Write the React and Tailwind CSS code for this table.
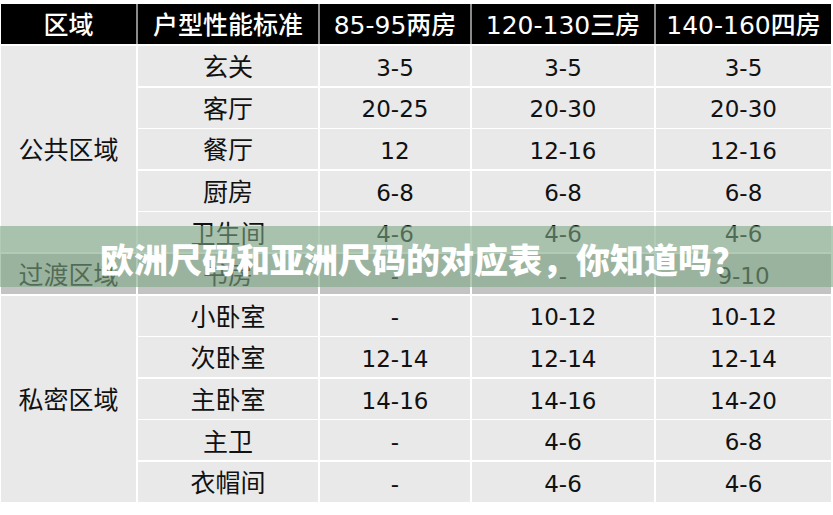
import React from 'react'

const font = { fontFamily: '"DejaVu Sans", "Noto Sans CJK SC", sans-serif' }

const headers = ['区域', '户型性能标准', '85-95两房', '120-130三房', '140-160四房']

const rows = [
  ['玄关', '3-5', '3-5', '3-5'],
  ['客厅', '20-25', '20-30', '20-30'],
  ['餐厅', '12', '12-16', '12-16'],
  ['厨房', '6-8', '6-8', '6-8'],
  ['卫生间', '4-6', '4-6', '4-6'],
  ['书房', '-', '-', '9-10'],
  ['小卧室', '-', '10-12', '10-12'],
  ['次卧室', '12-14', '12-14', '12-14'],
  ['主卧室', '14-16', '14-16', '14-20'],
  ['主卫', '-', '4-6', '6-8'],
  ['衣帽间', '-', '4-6', '4-6'],
]

// zone column is merged over several rows
const zones = [
  { name: '公共区域', span: 'row-span-5', start: 1, dark: false },
  { name: '过渡区域', span: 'row-span-1', start: 6, dark: true },
  { name: '私密区域', span: 'row-span-5', start: 7, dark: false },
]

const cols = 'grid grid-cols-[135px_180px_150px_182px_175px] gap-x-[2px]'

export default function App() {
  return (
    <div className="relative w-[833px] h-[515px] bg-white overflow-hidden text-[#111]" style={font}>
      <div className="pt-[4px] pl-px">
        {/* Header */}
        <div className={`${cols} bg-[#8a8a8a] w-[830px]`}>
          {headers.map((h) => (
            <div key={h} className="h-[40px] pt-[3px] bg-black text-white flex items-center justify-center text-[25px] font-medium whitespace-nowrap">
              {h}
            </div>
          ))}
        </div>

        {/* Body */}
        <div className={`${cols} grid-rows-[repeat(11,40px)] gap-y-[1.6px] mt-[2px]`}>
          {zones.map((z) => (
            <div
              key={z.name}
              className={`${z.span} col-start-1 pt-[4px] flex items-center justify-center text-[25px] ${z.dark ? 'bg-[#c3c3c3]' : 'bg-[#e9e9e9]'}`}
              style={{ gridRowStart: z.start }}
            >
              {z.name}
            </div>
          ))}
          {rows.map((r, ri) =>
            r.map((c, ci) => (
              <div
                key={ri + '-' + ci}
                className={`pt-[4px] flex items-center justify-center whitespace-nowrap ${ci === 0 ? 'text-[25px]' : 'text-[23px]'} ${ri === 5 ? 'bg-[#c3c3c3]' : 'bg-[#e9e9e9]'}`}
                style={{ gridRowStart: ri + 1, gridColumnStart: ci + 2 }}
              >
                {c}
              </div>
            ))
          )}
        </div>
      </div>

      {/* Title banner over the table */}
      <div className="absolute left-0 top-[226px] w-full h-[61px] bg-[rgba(126,168,133,0.6)] flex items-center pl-[100px]">
        <span className="text-white font-black text-[34px] mt-[4px] whitespace-nowrap" style={{ fontFamily: '"Noto Sans CJK SC", sans-serif' }}>
          欧洲尺码和亚洲尺码的对应表，你知道吗？
        </span>
      </div>
    </div>
  )
}
